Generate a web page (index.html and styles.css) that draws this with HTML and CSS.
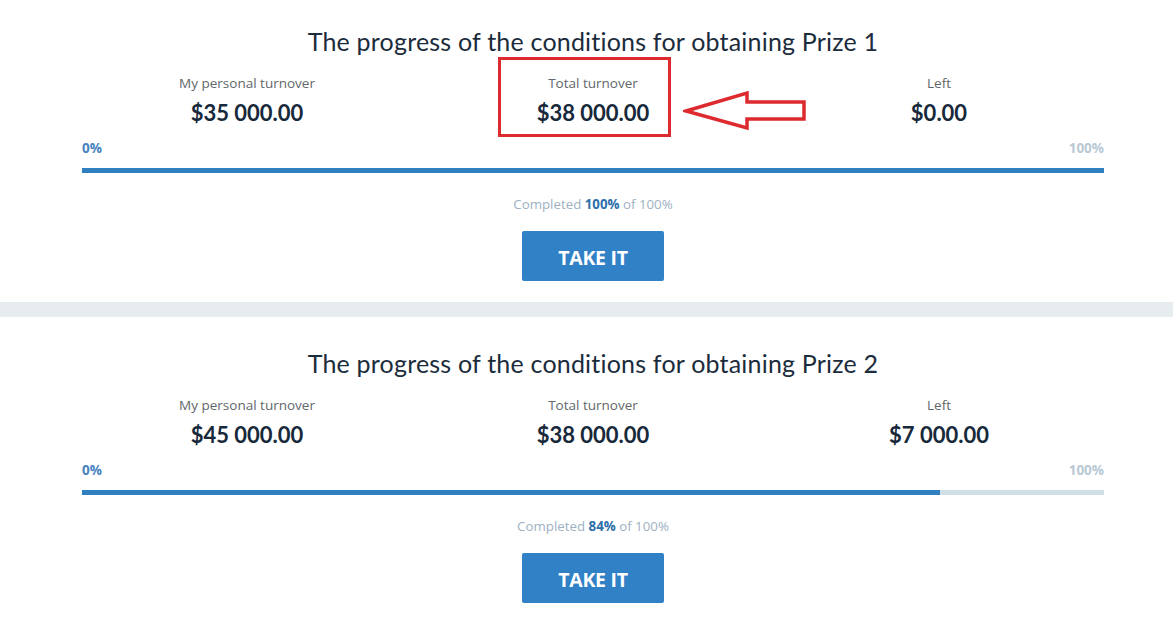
FILE: index.html
```html
<!DOCTYPE html>
<html>
<head>
<meta charset="utf-8">
<link rel="stylesheet" href="styles.css">
</head>
<body>
<div class="page">
  <section class="prize">
    <div class="container">
      <h2 class="title">The progress of the conditions for obtaining Prize 1</h2>
      <div class="stats">
        <div class="stat"><div class="label">My personal turnover</div><div class="value">$35 000.00</div></div>
        <div class="stat"><div class="label">Total turnover</div><div class="value">$38 000.00</div></div>
        <div class="stat"><div class="label">Left</div><div class="value">$0.00</div></div>
      </div>
      <div class="scale"><span class="min">0%</span><span class="max">100%</span></div>
      <div class="bar"><div class="fill" style="width:100%"></div></div>
      <div class="completed">Completed <b>100%</b> of 100%</div>
      <div class="actions"><button class="btn">TAKE IT</button></div>
    </div>
  </section>
  <div class="band"></div>
  <section class="prize">
    <div class="container">
      <h2 class="title">The progress of the conditions for obtaining Prize 2</h2>
      <div class="stats">
        <div class="stat"><div class="label">My personal turnover</div><div class="value">$45 000.00</div></div>
        <div class="stat"><div class="label">Total turnover</div><div class="value">$38 000.00</div></div>
        <div class="stat"><div class="label">Left</div><div class="value">$7 000.00</div></div>
      </div>
      <div class="scale"><span class="min">0%</span><span class="max">100%</span></div>
      <div class="bar"><div class="fill" style="width:84%"></div></div>
      <div class="completed">Completed <b>84%</b> of 100%</div>
      <div class="actions"><button class="btn">TAKE IT</button></div>
    </div>
  </section>
  <div class="highlight"></div>
  <svg class="arrow" width="130" height="44" viewBox="0 0 130 44">
    <polygon points="3,21 64,3 64,12 121,12 121,29 64,29 64,38" fill="none" stroke="#dc2a2f" stroke-width="3.5" stroke-linejoin="miter"/>
  </svg>
</div>
</body>
</html>
```
FILE: styles.css
```css
* { box-sizing: border-box; }
html, body { margin: 0; padding: 0; background: #fff; }
body { width: 1173px; height: 630px; overflow: hidden; font-family: "Open Sans", sans-serif; }
.page { position: relative; }
.prize { padding: 26px 0 21px; }
.container { width: 1022px; margin-left: 82px; }
.title {
  margin: 0;
  font-family: Lato, sans-serif;
  font-weight: 400;
  font-size: 25px;
  line-height: 30px;
  letter-spacing: 0.2px;
  font-variant-ligatures: none;
  color: #1b2c3c;
  text-align: center;
}
.stats {
  display: grid;
  grid-template-columns: repeat(3, 346px);
  margin: 18px -8px 0;
  text-align: center;
}
.label { font-size: 13.5px; line-height: 18px; color: #62676b; }
.value {
  margin-top: 7px;
  font-family: Lato, sans-serif;
  font-weight: 700;
  font-size: 22px;
  line-height: 27px;
  color: #17293a;
}
.scale {
  display: flex;
  justify-content: space-between;
  margin-top: 14px;
  font-size: 13.5px;
  line-height: 16px;
  font-weight: 700;
}
.min { color: #4682bd; }
.max { color: #b9c9d5; }
.bar { margin-top: 12px; height: 5px; background: #d0e0e4; }
.fill { height: 100%; background: #2f7fc1; }
.completed {
  margin-top: 23px;
  text-align: center;
  font-size: 13.3px;
  line-height: 16px;
  color: #9db1c2;
}
.completed b { color: #2d6ea9; }
.actions { display: flex; justify-content: center; margin-top: 19px; }
.btn {
  width: 142px;
  height: 50px;
  padding: 3px 0 0;
  border: 0;
  border-radius: 2px;
  background: #3081c6;
  color: #fff;
  font-family: "Open Sans", sans-serif;
  font-weight: 700;
  font-size: 19.5px;
  letter-spacing: -0.3px;
}
.band { height: 15px; margin-bottom: 5px; background: #e7ecef; }
.highlight {
  position: absolute;
  left: 498px;
  top: 57px;
  width: 173px;
  height: 80px;
  border: 3px solid #dc2a2f;
}
.arrow { position: absolute; left: 683px; top: 90px; }
```
